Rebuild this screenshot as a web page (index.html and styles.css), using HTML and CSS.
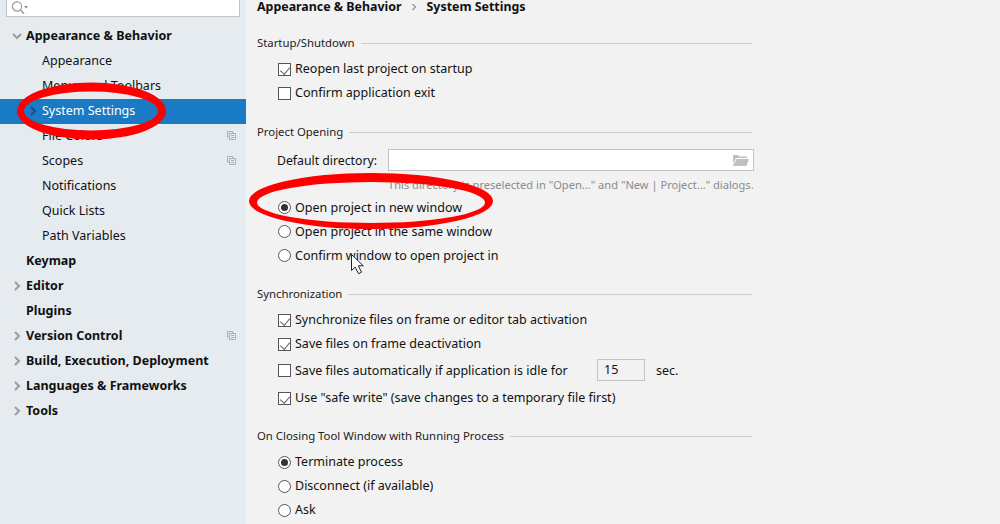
FILE: index.html
```html
<!DOCTYPE html>
<html lang="en">
<head>
<meta charset="utf-8">
<title>System Settings</title>
<link rel="stylesheet" href="styles.css">
</head>
<body>
<div class="app">
  <aside class="sidebar">
    <div class="search">
      <svg class="search-icon" width="18" height="14" viewBox="0 0 18 14"><circle cx="6" cy="5.5" r="4.6" fill="none" stroke="#9a9a9a" stroke-width="1.2"/><path d="M9.5 9l3.5 3.8" stroke="#9a9a9a" stroke-width="1.4"/><path d="M13 5h4l-2 2.4z" fill="#8a8a8a"/></svg>
    </div>
    <nav class="tree">
      <div class="row top"><svg class="arrow" width="10" height="10" viewBox="0 0 10 10"><path d="M1 3l4 4 4-4" fill="none" stroke="#9c9c9c" stroke-width="2"/></svg>Appearance &amp; Behavior</div>
      <div class="row sub">Appearance</div>
      <div class="row sub">Menus and Toolbars</div>
      <div class="row sub selected"><svg class="arrow-sel" width="8" height="10" viewBox="0 0 8 10"><path d="M2 1l4 4-4 4" fill="none" stroke="#15508a" stroke-width="2"/></svg>System Settings</div>
      <div class="row sub">File Colors<svg class="copy" width="9" height="9" viewBox="0 0 9 9"><path d="M.5.5h5.500v2M.5.5v5.500h2M2.500 2.500h6v6h-6zM4 4.500h3M4 6.500h3" fill="none" stroke="#a9b0b6"/></svg></div>
      <div class="row sub">Scopes<svg class="copy" width="9" height="9" viewBox="0 0 9 9"><path d="M.5.5h5.500v2M.5.5v5.500h2M2.500 2.500h6v6h-6zM4 4.500h3M4 6.500h3" fill="none" stroke="#a9b0b6"/></svg></div>
      <div class="row sub">Notifications</div>
      <div class="row sub">Quick Lists</div>
      <div class="row sub">Path Variables</div>
      <div class="row top">Keymap</div>
      <div class="row top"><svg class="arrow" width="10" height="10" viewBox="0 0 10 10"><path d="M3 1l4 4-4 4" fill="none" stroke="#9c9c9c" stroke-width="2"/></svg>Editor</div>
      <div class="row top">Plugins</div>
      <div class="row top"><svg class="arrow" width="10" height="10" viewBox="0 0 10 10"><path d="M3 1l4 4-4 4" fill="none" stroke="#9c9c9c" stroke-width="2"/></svg>Version Control<svg class="copy" width="9" height="9" viewBox="0 0 9 9"><path d="M.5.5h5.500v2M.5.5v5.500h2M2.500 2.500h6v6h-6zM4 4.500h3M4 6.500h3" fill="none" stroke="#a9b0b6"/></svg></div>
      <div class="row top"><svg class="arrow" width="10" height="10" viewBox="0 0 10 10"><path d="M3 1l4 4-4 4" fill="none" stroke="#9c9c9c" stroke-width="2"/></svg>Build, Execution, Deployment</div>
      <div class="row top"><svg class="arrow" width="10" height="10" viewBox="0 0 10 10"><path d="M3 1l4 4-4 4" fill="none" stroke="#9c9c9c" stroke-width="2"/></svg>Languages &amp; Frameworks</div>
      <div class="row top"><svg class="arrow" width="10" height="10" viewBox="0 0 10 10"><path d="M3 1l4 4-4 4" fill="none" stroke="#9c9c9c" stroke-width="2"/></svg>Tools</div>
    </nav>
  </aside>

  <main class="content">
    <header class="crumbs"><span>Appearance &amp; Behavior</span><svg class="crumb-sep" width="6" height="8" viewBox="0 0 6 8"><path d="M1.500 1l3 3-3 3" fill="none" stroke="#555" stroke-width="1"/></svg><span>System Settings</span></header>

    <section class="group startup">
      <h2 class="title"><span>Startup/Shutdown</span></h2>
      <label class="opt"><i class="box on"></i>Reopen last project on startup</label>
      <label class="opt"><i class="box"></i>Confirm application exit</label>
    </section>

    <section class="group">
      <h2 class="title"><span>Project Opening</span></h2>
      <div class="dir-row">
        <span class="dir-label">Default directory:</span>
        <div class="dir-input"><svg width="17" height="12" viewBox="0 0 17 12"><path d="M1 1h5l1.500 1.500H15V4H4L1 10z" fill="#bcc1c5"/><path d="M4.500 5H17l-2.500 7H.8z" fill="#bcc1c5"/></svg></div>
      </div>
      <p class="hint">This directory is preselected in "Open..." and "New | Project..." dialogs.</p>
      <label class="opt"><i class="radio on"></i>Open project in new window</label>
      <label class="opt"><i class="radio"></i>Open project in the same window</label>
      <label class="opt"><i class="radio"></i>Confirm window to open project in</label>
    </section>

    <section class="group">
      <h2 class="title"><span>Synchronization</span></h2>
      <label class="opt"><i class="box on"></i>Synchronize files on frame or editor tab activation</label>
      <label class="opt"><i class="box on"></i>Save files on frame deactivation</label>
      <label class="opt idle"><i class="box"></i><span class="idle-text">Save files automatically if application is idle for</span><span class="num">15</span><span>sec.</span></label>
      <label class="opt"><i class="box on"></i>Use "safe write" (save changes to a temporary file first)</label>
    </section>

    <section class="group closing">
      <h2 class="title"><span>On Closing Tool Window with Running Process</span></h2>
      <label class="opt"><i class="radio on"></i>Terminate process</label>
      <label class="opt"><i class="radio"></i>Disconnect (if available)</label>
      <label class="opt"><i class="radio"></i>Ask</label>
    </section>
  </main>
</div>

<svg class="overlay" width="1000" height="524" viewBox="0 0 1000 524">
  <path fill="#f00" fill-rule="evenodd" d="M17 111a74.500 28.500 0 1 0 149 0a74.500 28.500 0 1 0-149 0zM24 111a67 19.500 0 1 1 134 0a67 19.500 0 1 1-134 0z"/>
  <path fill="#f00" fill-rule="evenodd" d="M249 201a122 28 0 1 0 244 0a122 28 0 1 0-244 0zM257 202.500a114 20.500 0 1 1 228 0a114 20.500 0 1 1-228 0z"/>
  <path d="M351.500 254.500v16l3.700-3.400 3.300 6.600 3-1.500-3.200-6.400h5z" fill="#fff" stroke="#222" stroke-width="1"/>
</svg>
</body>
</html>
```

FILE: styles.css
```css
* { box-sizing: border-box; }
html, body { margin: 0; height: 100%; overflow: hidden; }
body { font-family: "Noto Sans", "Open Sans", sans-serif; font-size: 12.500px; color: #111; background: #f2f2f2; }
.app { display: flex; height: 524px; }

.sidebar { width: 246px; flex: none; background: #e6ebf0; }
.search { height: 17px; margin: 0 6px 7px; background: #fff; border: 1px solid #c4c4c4; border-top: 0; display: flex; align-items: center; padding-left: 4px; }
.search-icon { display: block; }
.row { height: 25px; line-height: 24px; position: relative; white-space: nowrap; }
.row.top { padding-left: 26px; font-weight: 700; color: #111; }
.row.sub { padding-left: 42px; }
.row.selected { background: #1a7bc4; color: #fff; }
.arrow { position: absolute; left: 12px; top: 7px; }
.arrow-sel { position: absolute; left: 29px; top: 7px; }
.copy { position: absolute; left: 227px; top: 7px; }

.content { flex: none; width: 495px; margin-left: 11px; }
.crumbs { height: 13px; line-height: 13px; font-size: 12.400px; font-weight: 700; display: flex; align-items: center; color: #111; }
.crumb-sep { margin: 0 9.500px; }
.group { margin-top: 17px; }
.crumbs + .group { margin-top: 20px; }
.startup { padding-bottom: 1px; }
.title { margin: 0 0 3px; height: 20px; font: inherit; font-size: 11.350px; line-height: 20px; color: #222; display: flex; align-items: center; gap: 6px; white-space: nowrap; }
.title::after { content: ""; flex: 1; height: 1px; background: #cdcdcd; }
.opt { height: 24px; display: flex; align-items: center; padding-left: 21px; white-space: nowrap; }
.box { width: 13px; height: 13px; margin: 2px 4px 0 0; border: 1px solid #555; background: #fff; flex: none; position: relative; }
.box.on::after { content: ""; position: absolute; left: 2.500px; top: 1px; width: 5px; height: 8px; border: solid #666; border-width: 0 1.300px 1.300px 0; transform: rotate(40deg); }
.radio { width: 13px; height: 13px; margin-right: 4px; border: 1px solid #555; border-radius: 50%; background: #fff; flex: none; position: relative; }
.radio.on::after { content: ""; position: absolute; left: 2px; top: 2px; width: 7px; height: 7px; border-radius: 50%; background: #333; }
.closing .radio { margin-top: 2px; }
.dir-row { display: flex; align-items: center; margin-top: 7px; padding-left: 20px; height: 22px; }
.dir-label { width: 111px; flex: none; font-size: 12.250px; }
.dir-input { width: 366px; height: 22px; margin-right: -2px; background: #fff; border: 1px solid #c4c4c4; display: flex; align-items: center; justify-content: flex-end; padding-right: 4px; }
.dir-input svg { display: block; }
.hint { margin: 5px 0 1px; height: 18px; line-height: 18px; padding-left: 131px; font-size: 11.100px; color: #8b8b8b; white-space: nowrap; }
.opt.idle { height: 30px; }
.idle .box { margin-top: 0; }
.idle-text { width: 302px; flex: none; }
.num { width: 48px; height: 22px; line-height: 20px; border: 1px solid #c4c4c4; background: #f2f2f2; padding-left: 6px; margin-right: 11px; flex: none; }
.overlay { position: absolute; left: 0; top: 0; pointer-events: none; }
```
